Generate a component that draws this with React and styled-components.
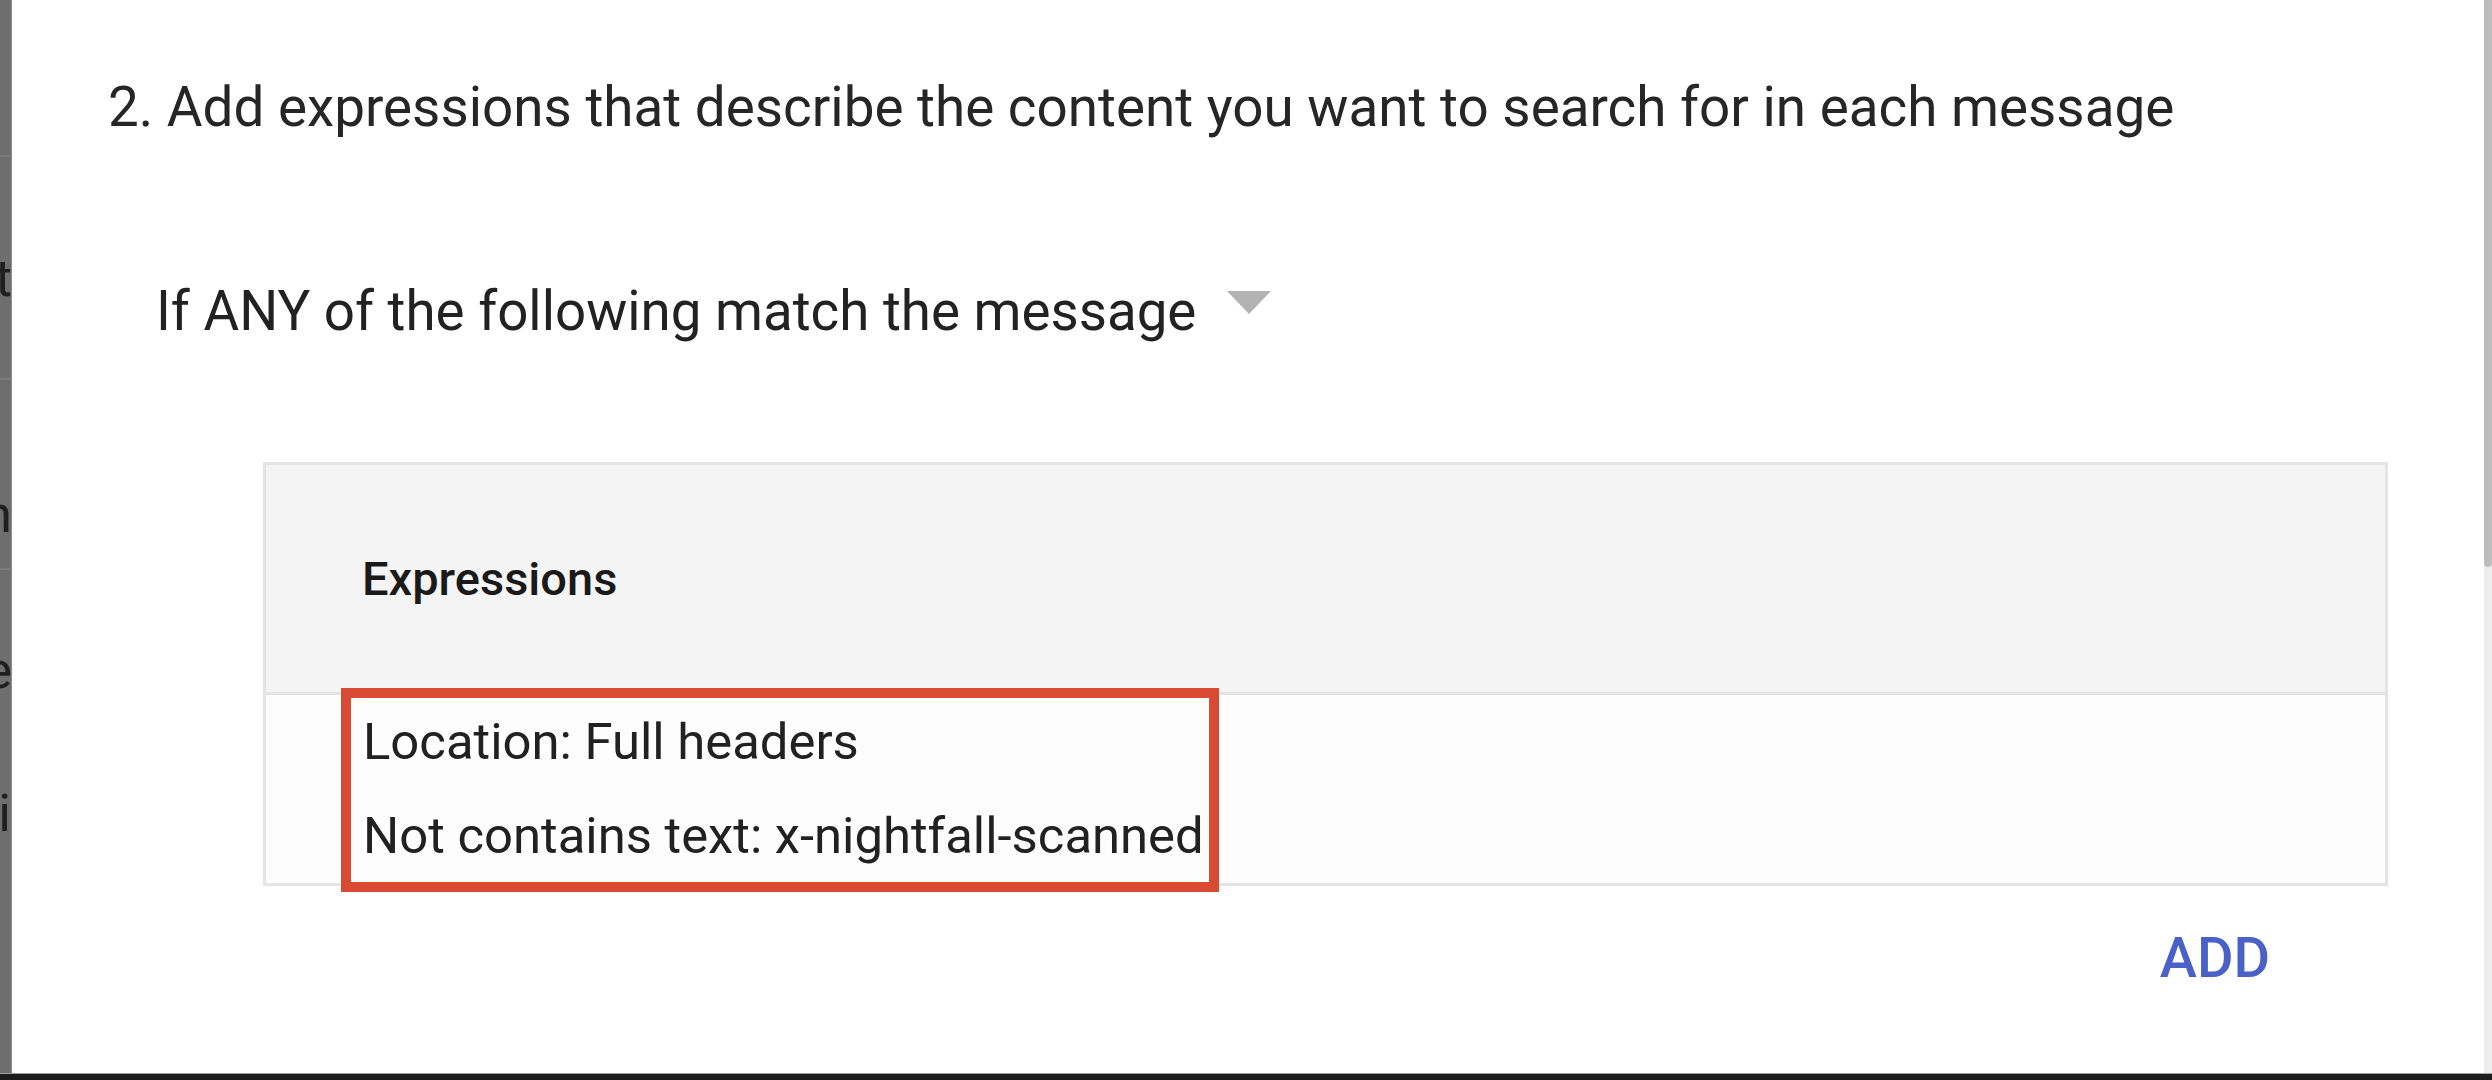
import React from 'react';
import styled, { createGlobalStyle } from 'styled-components';

const Global = createGlobalStyle`
  html, body { margin: 0; padding: 0; background: #fff; }
  body { font-family: Roboto, "Noto Sans", "Liberation Sans", sans-serif; overflow: hidden; }
  * { box-sizing: border-box; }
`;

const Screen = styled.div`
  width: 2492px;
  height: 1080px;
  display: flex;
  flex-direction: column;
  overflow: hidden;
`;

const Workspace = styled.div`
  flex: 1;
  min-height: 0;
  display: flex;
`;

const BackdropStrip = styled.div`
  width: 12px;
  flex: none;
  background: #6e6e6e;
  display: flex;
  flex-direction: column;
  overflow: hidden;
  box-shadow: inset -1px 0 0 #8c8c8c;
`;

const StripSpacer = styled.div`
  height: ${(p) => p.$h}px;
  flex: none;
`;

const StripRule = styled.div`
  height: 2px;
  flex: none;
  background: #7c7c7c;
`;

const StripGlyph = styled.div`
  height: 60px;
  flex: none;
  display: flex;
  justify-content: flex-end;
  padding-right: ${(p) => p.$pr || 0}px;
  font-size: 52px;
  line-height: 60px;
  color: #1f1f1f;
  white-space: nowrap;
`;

const Dialog = styled.main`
  flex: 1;
  min-width: 0;
  background: #fff;
  padding-top: 75px;
  display: flex;
  flex-direction: column;
`;

const StepTitle = styled.h2`
  margin: 0 0 0 96px;
  font-size: 54.8px;
  font-weight: 400;
  line-height: 64px;
  color: #262626;
  white-space: nowrap;
`;

const MatchSelect = styled.div`
  display: flex;
  align-items: flex-start;
  margin: 139px 0 0 144px;
  font-size: 54.7px;
  line-height: 66px;
  color: #222;
  white-space: nowrap;
`;

const Caret = styled.span`
  width: 0;
  height: 0;
  border-left: 22px solid transparent;
  border-right: 22px solid transparent;
  border-top: 23px solid #b3b3b3;
  margin: 13px 0 0 31px;
`;

const ExprTable = styled.section`
  margin: 118px 96px 0 251px;
  border: 3px solid #e4e4e4;
  background: #fdfdfd;
`;

const ExprHeader = styled.div`
  height: 230px;
  background: #f4f4f4;
  border-bottom: 3px solid #e4e4e4;
  display: flex;
  align-items: center;
  padding-left: 96px;
  font-size: 47px;
  font-weight: 500;
  color: #1a1a1a;
`;

const ExprBody = styled.div`
  display: flex;
  padding-left: 97px;
`;

const Highlight = styled.div`
  position: relative;
  display: flex;
  flex-direction: column;
`;

const HighlightFrame = styled.span`
  position: absolute;
  left: -22px;
  right: -15px;
  top: -7px;
  bottom: -9px;
  border: 10px solid #d84a31;
  pointer-events: none;
`;

const ExprLine = styled.div`
  font-size: 50.8px;
  line-height: 94px;
  color: #212121;
  white-space: nowrap;
`;

const Actions = styled.div`
  display: flex;
  justify-content: flex-end;
  margin: 39px 214px 0 0;
`;

const AddButton = styled.button`
  border: 0;
  background: none;
  padding: 0;
  font-family: inherit;
  font-size: 56px;
  font-weight: 500;
  line-height: 66px;
  color: #4a62c8;
  cursor: pointer;
`;

const ScrollTrack = styled.div`
  width: 8px;
  flex: none;
  background: #ededed;
  display: flex;
  flex-direction: column;
`;

const ScrollThumb = styled.div`
  height: 567px;
  background: #bdbdbd;
  border-radius: 0 0 5px 5px;
`;

const TaskEdge = styled.div`
  height: 7px;
  flex: none;
  background: #1c1c1c;
  border-top: 1px solid #9e9e9e;
`;

export default function App() {
  return (
    <>
      <Global />
      <Screen>
        <Workspace>
          <BackdropStrip>
            <StripSpacer $h={155} />
            <StripRule />
            <StripSpacer $h={92} />
            <StripGlyph>t</StripGlyph>
            <StripSpacer $h={69} />
            <StripRule />
            <StripSpacer $h={105} />
            <StripGlyph>n</StripGlyph>
            <StripSpacer $h={23} />
            <StripRule />
            <StripSpacer $h={71} />
            <StripGlyph>e</StripGlyph>
            <StripSpacer $h={83} />
            <StripGlyph $pr={1}>i</StripGlyph>
          </BackdropStrip>
          <Dialog>
            <StepTitle>2. Add expressions that describe the content you want to search for in each message</StepTitle>
            <MatchSelect>
              If ANY of the following match the message
              <Caret />
            </MatchSelect>
            <ExprTable>
              <ExprHeader>Expressions</ExprHeader>
              <ExprBody>
                <Highlight>
                  <ExprLine>Location: Full headers</ExprLine>
                  <ExprLine>Not contains text: x-nightfall-scanned</ExprLine>
                  <HighlightFrame />
                </Highlight>
              </ExprBody>
            </ExprTable>
            <Actions>
              <AddButton>ADD</AddButton>
            </Actions>
          </Dialog>
          <ScrollTrack>
            <ScrollThumb />
          </ScrollTrack>
        </Workspace>
        <TaskEdge />
      </Screen>
    </>
  );
}
